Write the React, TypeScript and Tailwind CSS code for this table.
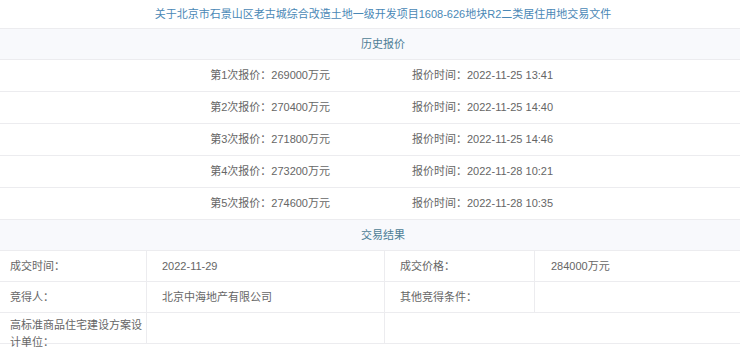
import React from 'react';

const quotes = [
  { n: 1, price: '269000', time: '2022-11-25 13:41' },
  { n: 2, price: '270400', time: '2022-11-25 14:40' },
  { n: 3, price: '271800', time: '2022-11-25 14:46' },
  { n: 4, price: '273200', time: '2022-11-28 10:21' },
  { n: 5, price: '274600', time: '2022-11-28 10:35' },
];

const font = "font-['Liberation_Sans','Noto_Sans_CJK_SC',sans-serif]";

const App: React.FC = () => {
  return (
    <div className={`w-[740px] h-[355px] bg-white text-[11px] text-[#666] overflow-hidden ${font}`}>
      <div className="h-[29px] flex items-center justify-center pl-[26px] text-[#4a88b6] border-b border-[#ececef]">
        关于北京市石景山区老古城综合改造土地一级开发项目1608-626地块R2二类居住用地交易文件
      </div>
      <div className="h-[31px] flex items-center justify-center pl-[26px] bg-[#f8f9fc] text-[#4d7d96] border-b border-[#ececef]">
        历史报价
      </div>
      {quotes.map((q) => (
        <div key={q.n} className="h-[32px] grid grid-cols-2 items-center border-b border-[#ececef]">
          <div className="text-right pr-[40px]">第{q.n}次报价：{q.price}万元</div>
          <div className="pl-[42px]">报价时间：{q.time}</div>
        </div>
      ))}
      <div className="h-[31px] flex items-center justify-center pl-[26px] bg-[#f8f9fc] text-[#4d7d96] border-b border-[#ececef]">
        交易结果
      </div>
      <div className="h-[31px] flex border-b border-[#ececef]">
        <div className="w-[147px] px-[10px] flex items-center border-r border-[#ececef]">成交时间：</div>
        <div className="w-[238px] px-[15px] flex items-center border-r border-[#ececef]">2022-11-29</div>
        <div className="w-[150px] px-[15px] flex items-center border-r border-[#ececef]">成交价格：</div>
        <div className="flex-1 px-[16px] flex items-center">284000万元</div>
      </div>
      <div className="h-[31px] flex border-b border-[#ececef]">
        <div className="w-[147px] px-[10px] flex items-center border-r border-[#ececef]">竞得人：</div>
        <div className="w-[238px] px-[15px] flex items-center border-r border-[#ececef]">北京中海地产有限公司</div>
        <div className="w-[150px] px-[15px] flex items-center border-r border-[#ececef]">其他竞得条件：</div>
        <div className="flex-1 px-[16px] flex items-center"></div>
      </div>
      <div className="h-[31px] flex border-b border-[#ececef]">
        <div className="w-[147px] pl-[10px] pr-[2px] pt-[4px] leading-[17px] border-r border-[#ececef]">
          高标准商品住宅建设方案设计单位：
        </div>
        <div className="w-[238px] border-r border-[#ececef]"></div>
        <div className="flex-1"></div>
      </div>
    </div>
  );
};

export default App;
